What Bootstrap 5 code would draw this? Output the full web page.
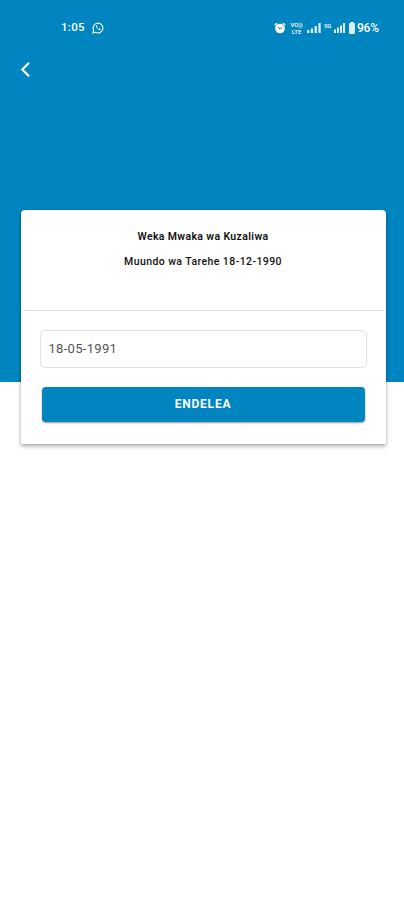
<!DOCTYPE html>
<html lang="sw">
<head>
<meta charset="utf-8">
<meta name="viewport" content="width=device-width, initial-scale=1">
<title>Weka Mwaka wa Kuzaliwa</title>
<link rel="stylesheet" href="https://cdn.jsdelivr.net/npm/bootstrap@5.3.0/dist/css/bootstrap.min.css">
<style>
  :root { --brand: #0085c1; }
  body { font-family: Roboto, "Liberation Sans", sans-serif; color: #111; background: #fff; }
  svg { display: block; flex: none; }
  .hero { height: 382px; background: var(--brand); }
  .status { height: 56px; padding: 0 25px 0 61px; font-size: 11.5px; line-height: 1; font-weight: 500; }
  .clock { width: 24px; margin-right: 7px; letter-spacing: .3px; }
  .volte { width: 13px; margin: 0 4px; font-size: 6px; line-height: 7px; }
  .net { width: 10px; margin: 0 0 5px 3px; font-size: 6px; line-height: 7px; letter-spacing: -.2px; white-space: nowrap; }
  .percent { width: 22px; margin-left: 2px; font-size: 12px; letter-spacing: -.2px; white-space: nowrap; }
  .back { margin: 5px 0 0 20px; width: 12px; height: 17px; }
  .entry { margin: -172px 18.5px 0 20.5px; height: 234px; border-radius: 4px 4px 1px 1px; box-shadow: 0 2px 4px rgba(0,0,0,.34), 0 0 1px rgba(0,0,0,.25); }
  .entry-head { height: 101px; padding-top: 20px; border-bottom: 1px solid #e3e3e3; margin: 0 2px; }
  .entry-head p { font-size: 10.5px; line-height: 13px; margin-bottom: 12px; }
  .line-a { letter-spacing: .36px; font-weight: 600; }
  .line-b { letter-spacing: .42px; font-weight: 500; }
  .entry-body { padding: 19px 19px 0; }
  .date-field { height: 38px; border: 1px solid #e2e2e2; border-radius: 5px; padding: 0 8px 2px; font-size: 13px; letter-spacing: .3px; color: #555; }
  .btn-next, .btn-next:hover { height: 35px; margin: 18.5px 2px 0; width: calc(100% - 4px); padding: 0; background: var(--brand); color: #fff; border: 0; border-radius: 4px; font-size: 12px; font-weight: 700; letter-spacing: .8px; box-shadow: 0 1px 2px rgba(0,0,0,.4); }
</style>
</head>
<body class="min-vh-100">
<header class="hero text-white">
  <div class="status d-flex align-items-center">
    <span class="clock">1:05</span>
    <svg width="12" height="12" viewBox="0 0 12 12" fill="none" stroke="#fff">
      <path d="M1 11l.7-2.6A4.9 4.9 0 1 1 3.6 10.300z" stroke-width="1.100"/>
      <path d="M4 3.500c-.7 1.700 2.300 4.900 4.300 4.500l.3-1-1.300-.7-.7.600C5.900 6.600 5.200 5.900 5 5.200l.5-.6-.5-1.200z" fill="#fff" stroke="none"/>
    </svg>
    <svg class="ms-auto" width="12" height="12" viewBox="0 0 12 12">
      <circle cx="6" cy="6.500" r="4.800" fill="#fff"/>
      <path d="M.8 3.200L3 1.200M11.200 3.200L9 1.200" stroke="#fff" stroke-width="1.500"/>
      <path d="M4 5l2 2 2.200-1.500" fill="none" stroke="#0085c1" stroke-width="1"/>
    </svg>
    <span class="volte text-center">VO))<br>LTE</span>
    <svg width="14" height="10" viewBox="0 0 14 10" fill="#fff">
      <path d="M0 7h2.300v3H0zM3.800 5.500h2.300V10H3.800zM7.600 3h2.300v7H7.600zM11.400 0h2.300v10h-2.300z" opacity=".85"/>
    </svg>
    <span class="net">5G</span>
    <svg width="11" height="10" viewBox="0 0 11 10" fill="#fff">
      <path d="M0 6.500h2V10H0zM3 4.500h2V10H3zM6 2.500h2V10H6zM9 0h2v10H9z" opacity=".85"/>
    </svg>
    <svg class="ms-1" width="6" height="12" viewBox="0 0 6 12" fill="#fff">
      <path d="M1.500 0h3v1h-3z"/><rect y="1" width="6" height="11" rx="1.200" opacity=".85"/>
    </svg>
    <span class="percent">96%</span>
  </div>
  <svg class="back" viewBox="0 0 12 17" fill="none" stroke="#fff" stroke-width="2.200">
    <path d="M9 1.800L2.300 8.500 9 15.200"/>
  </svg>
</header>
<main class="entry bg-white position-relative">
  <div class="entry-head text-center">
    <p class="line-a">Weka Mwaka wa Kuzaliwa</p>
    <p class="line-b">Muundo wa Tarehe 18-12-1990</p>
  </div>
  <div class="entry-body">
    <input class="date-field form-control" type="text" value="18-05-1991" aria-label="Tarehe">
    <button class="btn btn-next d-block" type="button">ENDELEA</button>
  </div>
</main>
<script src="https://cdn.jsdelivr.net/npm/bootstrap@5.3.0/dist/js/bootstrap.bundle.min.js"></script>
</body>
</html>
